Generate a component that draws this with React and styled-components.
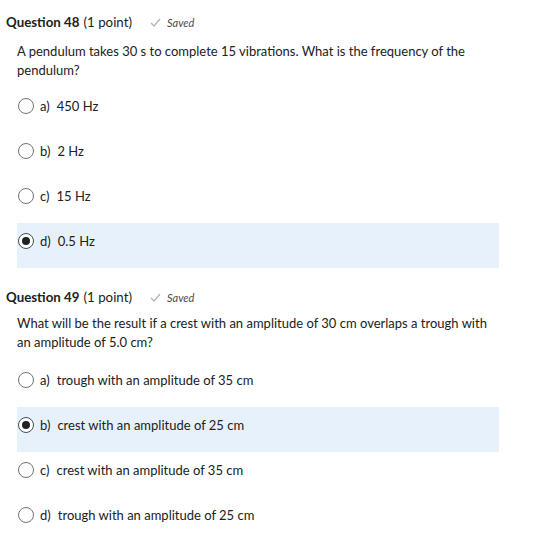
import styled, { createGlobalStyle } from 'styled-components';

const GlobalStyle = createGlobalStyle`
  body { margin: 0; background: #fff; font-family: Lato, "Open Sans", sans-serif; color: #202122; }
`;

const Page = styled.div`
  padding: 12px 0 0 6px;
  width: 530px;
`;

const Question = styled.section`
  margin-bottom: ${({ $last }) => ($last ? '0' : '19px')};
`;

const Header = styled.div`
  display: flex; align-items: center;
  height: 20px; font-size: 13.3px; color: #202122;
`;

const QNum = styled.span` font-weight: 700; `;
const Points = styled.span` margin-left: 4px; `;

const SavedTag = styled.span`
  display: flex; align-items: center; gap: 6px;
  margin-left: 18px; font-size: 11px; font-style: italic; color: #494c4e;
  svg { display: block; }
`;

const Body = styled.div`
  padding-left: 11px;
`;

const Prompt = styled.p`
  margin: ${({ $top }) => $top}px 0 ${({ $bottom }) => $bottom}px;
  font-size: 13px; line-height: 19px; color: #202122;
  width: 475px;
`;

const Option = styled.label`
  display: flex; align-items: flex-start; gap: 6px;
  width: 482px; height: 45px; box-sizing: border-box;
  padding: 10px 0 0 1px;
  background: ${({ $selected }) => ($selected ? '#e7f1fb' : 'transparent')};
  font-size: 13px; line-height: 17px; color: #202122;
`;

const Radio = styled.span`
  width: 16px; height: 16px; box-sizing: border-box; flex: none;
  border-radius: 50%; border: 1px solid ${({ $checked }) => ($checked ? '#494c4e' : '#6e7376')};
  background: #fff;
  display: flex; align-items: center; justify-content: center;
  &::after {
    content: ''; width: 8px; height: 8px; border-radius: 50%;
    background: #202122; display: ${({ $checked }) => ($checked ? 'block' : 'none')};
  }
`;

const Letter = styled.span` margin-right: 7px; `;

const Check = () => (
  <svg width="11" height="9" viewBox="0 0 11 9">
    <path d="M1 5 L4 8 L10 1" fill="none" stroke="#b3b6b8" strokeWidth="1.3" />
  </svg>
);

const questions = [
  {
    num: 48,
    text: 'A pendulum takes 30 s to complete 15 vibrations. What is the frequency of the pendulum?',
    options: ['450 Hz', '2 Hz', '15 Hz', '0.5 Hz'],
    selected: 3,
    top: 10, bottom: 8,
  },
  {
    num: 49,
    text: 'What will be the result if a crest with an amplitude of 30 cm overlaps a trough with an amplitude of 5.0 cm?',
    options: ['trough with an amplitude of 35 cm', 'crest with an amplitude of 25 cm', 'crest with an amplitude of 35 cm', 'trough with an amplitude of 25 cm'],
    selected: 1,
    top: 7, bottom: 10,
  },
];

export default function App() {
  return (
    <Page>
      <GlobalStyle />
      {questions.map((q, qi) => (
        <Question key={q.num} $last={qi === questions.length - 1}>
          <Header>
            <QNum>Question {q.num}</QNum>
            <Points>(1 point)</Points>
            <SavedTag><Check />Saved</SavedTag>
          </Header>
          <Body>
            <Prompt $top={q.top} $bottom={q.bottom}>{q.text}</Prompt>
            {q.options.map((opt, i) => (
              <Option key={i} $selected={q.selected === i}>
                <Radio $checked={q.selected === i} />
                <span><Letter>{'abcd'[i]})</Letter>{opt}</span>
              </Option>
            ))}
          </Body>
        </Question>
      ))}
    </Page>
  );
}
